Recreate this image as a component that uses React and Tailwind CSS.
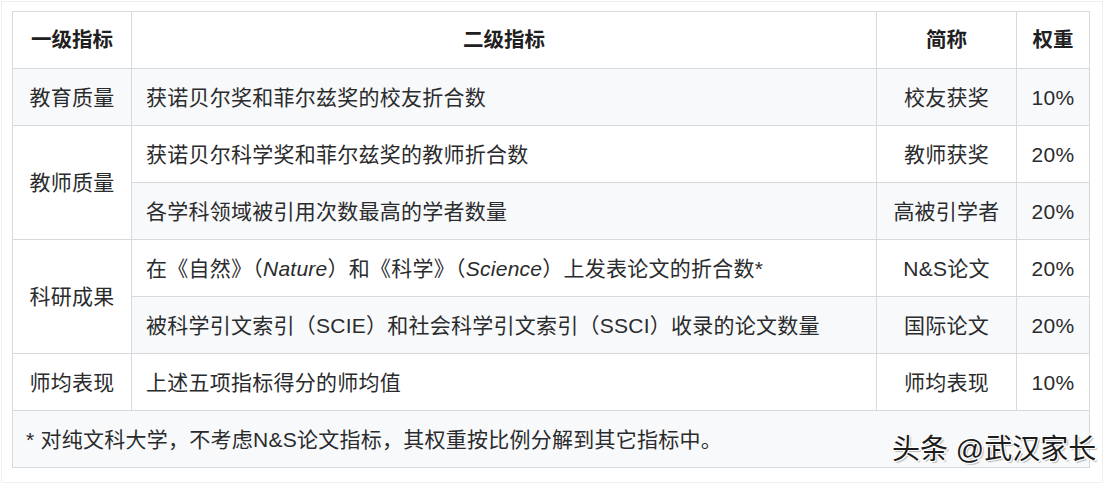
import React from 'react';

const rows = [
  { group: '教育质量', span: 1, text: '获诺贝尔奖和菲尔兹奖的校友折合数', short: '校友获奖', weight: '10%' },
  { group: '教师质量', span: 2, text: '获诺贝尔科学奖和菲尔兹奖的教师折合数', short: '教师获奖', weight: '20%' },
  { text: '各学科领域被引用次数最高的学者数量', short: '高被引学者', weight: '20%' },
  {
    group: '科研成果',
    span: 2,
    text: (
      <>
        在《自然》（<i>Nature</i>）和《科学》（<i>Science</i>）上发表论文的折合数*
      </>
    ),
    short: 'N&S论文',
    weight: '20%',
  },
  { text: '被科学引文索引（SCIE）和社会科学引文索引（SSCI）收录的论文数量', short: '国际论文', weight: '20%' },
  { group: '师均表现', span: 1, text: '上述五项指标得分的师均值', short: '师均表现', weight: '10%' },
];

const cell = 'border border-[#d6d9dd] h-[57px] p-0';

function App() {
  return (
    <div
      className="relative bg-white text-[#2a2b2d]"
      style={{ fontFamily: '"Liberation Sans", "Noto Sans CJK SC", sans-serif' }}
    >
      <div className="ml-[1px] mt-[1px] w-[1102px] h-[482px] border border-[#efefef] pl-[10px] pt-[9px]">
        <table className="table-fixed border-collapse w-[1077px] text-[21px] tracking-[0.25px] leading-none">
          <colgroup>
            <col className="w-[119px]" />
            <col className="w-[745px]" />
            <col className="w-[140px]" />
            <col className="w-[73px]" />
          </colgroup>
          <thead>
            <tr className="bg-white font-bold text-[#1f2021] text-[20.5px] tracking-normal">
              <th className={`${cell} text-center`}>一级指标</th>
              <th className={`${cell} text-center`}>二级指标</th>
              <th className={`${cell} text-center`}>简称</th>
              <th className={`${cell} text-center`}>权重</th>
            </tr>
          </thead>
          <tbody>
            {rows.map((r, i) => (
              <tr key={i} className={i % 2 === 0 ? 'bg-[#f8f9fa]' : 'bg-white'}>
                {r.group && (
                  <td rowSpan={r.span} className={`${cell} text-center`}>
                    {r.group}
                  </td>
                )}
                <td className={`${cell} pl-[14px] text-left whitespace-nowrap`}>{r.text}</td>
                <td className={`${cell} text-center`}>{r.short}</td>
                <td className={`${cell} text-center`}>{r.weight}</td>
              </tr>
            ))}
            <tr className="bg-[#f8f9fa]">
              <td colSpan={4} className={`${cell} pl-[13px] text-left`}>
                * 对纯文科大学，不考虑N&amp;S论文指标，其权重按比例分解到其它指标中。
              </td>
            </tr>
          </tbody>
        </table>
      </div>

      {/* watermark */}
      <div
        className="absolute left-[892px] top-[435px] text-[28px] leading-none text-[#1c1c1c] whitespace-nowrap"
        style={{
          textShadow:
            '1px 1px 0 #fff, -1px -1px 0 #fff, 1px -1px 0 #fff, -1px 1px 0 #fff, 2px 2px 1px rgba(0,0,0,0.25)',
        }}
      >
        头条 @武汉家长
      </div>
    </div>
  );
}

export default App;
